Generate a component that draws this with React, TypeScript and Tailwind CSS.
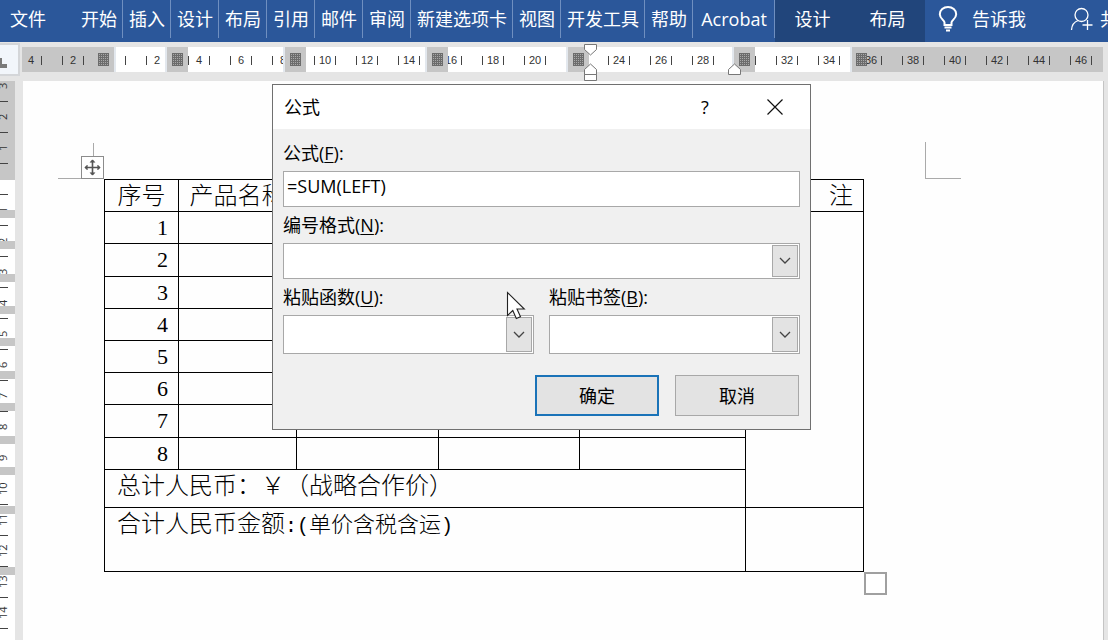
import type { ReactNode } from 'react';
import clsx from 'clsx';

const TABS = ['开始', '插入', '设计', '布局', '引用', '邮件', '审阅', '新建选项卡', '视图', '开发工具', '帮助', 'Acrobat'];
const TABLE_TABS = ['设计', '布局'];

const RULER = [4, 2, 0, ...Array.from({ length: 23 }, (_, i) => (i + 1) * 2)];
const SIDE_RULER = [3, 2, 1, 0, ...Array.from({ length: 14 }, (_, i) => i + 1)];

// column stops on the horizontal ruler
const STOPS = ['left-[143px]', 'left-[261px]', 'left-[403px]', 'left-[544px]', 'left-[710px]'];

// row boundaries on the vertical ruler
const ROW_STOPS = [
  'top-[129px]',
  'top-[160px]',
  'top-[193px]',
  'top-[225px]',
  'top-[257px]',
  'top-[290px]',
  'top-[322px]',
  'top-[355px]',
  'top-[386px]',
  'top-[425px]',
  'top-[486px]',
];

const ROWS = [1, 2, 3, 4, 5, 6, 7, 8];

function Ribbon() {
  return (
    <header className="flex h-[42px] items-stretch overflow-hidden whitespace-nowrap bg-[#2b579a] pb-1 text-lg leading-[38px] text-white">
      <button type="button" className="w-[75px] shrink-0 pl-[10px] text-left">
        文件
      </button>
      <nav className="flex shrink-0">
        {TABS.map((tab) => (
          <button
            key={tab}
            type="button"
            className={clsx('shrink-0 border-r border-[#6f8fc0] pl-[6px] pr-[5px]', tab === 'Acrobat' && 'w-[82px]')}
          >
            {tab}
          </button>
        ))}
      </nav>
      <nav className="-mb-1 flex shrink-0 bg-[#21457b] pb-1">
        {TABLE_TABS.map((tab) => (
          <button key={tab} type="button" className="w-[75px]">
            {tab}
          </button>
        ))}
      </nav>
      <button type="button" className="flex shrink-0 items-center gap-[14px] pl-[13px]">
        <svg width="20" height="26" viewBox="0 0 20 26" fill="none" stroke="currentColor" strokeWidth="2">
          <path d="M6.500 19v-2.500c0-2-4.700-4-4.700-8.300a8.200 7.200 0 0 1 16.400 0c0 4.300-4.700 6.300-4.700 8.300V19z" />
          <path d="M6.500 21.500h7M8 24.500h4" />
        </svg>
        告诉我
      </button>
      <button type="button" className="ml-auto flex shrink-0 items-center gap-[6px] pl-6">
        <svg width="24" height="24" viewBox="0 0 24 24" fill="none" stroke="currentColor" strokeWidth="1.3" className="shrink-0">
          <circle cx="11.500" cy="8" r="6.500" />
          <path d="M1.500 23c.3-4.800 3-8.300 6.700-9.500M17.500 13v10M12.500 18h10" />
        </svg>
        <span className="w-2 overflow-hidden">共</span>
      </button>
    </header>
  );
}

function Grid() {
  return (
    <svg width="11" height="13" viewBox="0 0 11 13" shapeRendering="crispEdges">
      <rect width="11" height="13" fill="#a8a8a8" />
      <path
        d="M0 .5h11M0 2.500h11M0 4.500h11M0 6.500h11M0 8.500h11M0 10.500h11M0 12.500h11M.5 0v13M2.500 0v13M4.500 0v13M6.500 0v13M8.500 0v13M10.500 0v13"
        stroke="#6c6c6c"
        strokeWidth="1"
      />
    </svg>
  );
}

function Ruler() {
  return (
    <div className="flex h-[39px] bg-[#e5e5e5]">
      <div className="relative mt-px h-[33px] w-5 shrink-0 overflow-hidden border-2 border-l-0 border-[#d4d6d9] bg-[#f2f6fb]">
        <svg width="8" height="11" viewBox="0 0 8 11" className="absolute left-0 top-[13px]">
          <path d="M0 0h2v6h5v4H0z" fill="#7a7a7a" />
        </svg>
      </div>
      <div className="relative ml-[2px] mr-[5px] mt-[5px] flex h-[25px] min-w-0 flex-1">
        <div className="w-[92px] shrink-0 bg-[#c6c6c6]" />
        <div className="w-[738px] shrink-0 border-x-2 border-[#e3e8ee] bg-white" />
        <div className="flex-1 bg-[#c6c6c6]" />
        <div className="absolute inset-0 overflow-hidden">
          <div className="-ml-3 flex h-full items-center pt-[2px] text-[11px] text-[#333]">
            {RULER.map((n, i) => (
              <div key={i} className="flex w-[42px] shrink-0 items-center justify-center">
                <span className="h-[9px] w-px bg-[#444]" />
                <span className="w-5 text-center">{n || ''}</span>
                <span className="h-[9px] w-px bg-[#444]" />
              </div>
            ))}
          </div>
        </div>
        {STOPS.map((left) => (
          <div
            key={left}
            className={clsx(
              'absolute inset-y-0 flex w-[23px] items-center justify-center border-l-2 border-[#e3e8ee] bg-[#c6c6c6]',
              left
            )}
          >
            <Grid />
          </div>
        ))}
        <div className="absolute left-[76px] top-[6px]">
          <Grid />
        </div>
        <div className="absolute left-[834px] top-[6px]">
          <Grid />
        </div>
        <svg width="14" height="38" viewBox="0 0 14 38" fill="#fff" stroke="#777" className="absolute -top-[3px] left-[562px]">
          <path d="M.5.500h12v5l-6 5.500-6-5.500z" />
          <path d="M.5 30.500v-5l6-5.500 6 5.500v5zM.500 30.500h12v6h-12z" />
        </svg>
        <svg width="14" height="12" viewBox="0 0 14 12" fill="#fff" stroke="#777" className="absolute left-[706px] top-4">
          <path d="M.5 11.500v-5l6-5.500 6 5.500v5z" />
        </svg>
      </div>
    </div>
  );
}

function SideRuler() {
  return (
    <div className="relative w-[23px] shrink-0 overflow-hidden bg-[#e5e5e5]">
      <div className="absolute inset-y-0 left-0 w-[15px] bg-white">
        <div className="h-[99px] bg-[#c6c6c6]" />
      </div>
      <div className="absolute -top-[10px] left-0 text-[11px] leading-[11px] text-[#333]">
        {SIDE_RULER.map((n, i) => (
          <div key={i} className="flex h-[31px] w-2 flex-col items-end border-b border-[#444]">
            <span className="flex flex-1 rotate-180 items-center justify-center [writing-mode:vertical-rl]">{n || ''}</span>
          </div>
        ))}
      </div>
      {ROW_STOPS.map((top) => (
        <div key={top} className={clsx('absolute left-0 h-2 w-[15px] bg-[#c6c6c6]', top)} />
      ))}
    </div>
  );
}

function Sheet() {
  return (
    <div className="relative min-w-0 flex-1 border-r border-[#c4c4c4] bg-[#fefefe] pl-[81px] pt-[98px]">
      {/* margin corners */}
      <div className="absolute left-[35px] top-[62px] h-9 w-9 border-b border-r border-[#aaa]" />
      <div className="absolute left-[902px] top-[61px] h-[37px] w-9 border-b border-l border-[#aaa]" />
      <button type="button" aria-label="移动表格" className="absolute left-[58px] top-[75px] flex size-[23px] items-center justify-center border border-[#8c8c8c] bg-white">
        <svg width="17" height="17" viewBox="0 0 17 17" fill="none" stroke="#555" strokeWidth="1.600">
          <path d="M8.500 1v15M1 8.500h15" />
          <path d="M6 3.300 8.500.8 11 3.300zM6 13.700l2.500 2.500 2.500-2.500zM3.300 6 .8 8.500 3.300 11zM13.700 6l2.500 2.500-2.500 2.500z" fill="#555" strokeWidth=".5" />
        </svg>
      </button>

      <table className="w-[760px] table-fixed border-collapse font-['Liberation_Serif','Noto_Sans_CJK_SC',serif] text-2xl font-light leading-7 text-black [&_td]:border [&_td]:border-black [&_td]:p-0 [&_th]:border [&_th]:border-black [&_th]:p-0">
        <colgroup>
          <col className="w-[74px]" />
          <col className="w-[118px]" />
          <col className="w-[142px]" />
          <col className="w-[141px]" />
          <col className="w-[166px]" />
          <col />
        </colgroup>
        <thead>
          <tr className="h-8 whitespace-nowrap">
            <th className="font-light">序号</th>
            <th className="font-light">产品名称</th>
            <th />
            <th />
            <th />
            <th className="text-right font-light">
              <span className="pr-[10px]">注</span>
            </th>
          </tr>
        </thead>
        <tbody>
          {ROWS.map((n) => (
            <tr key={n} className={n === 2 || n === 7 ? 'h-[33px]' : 'h-8'}>
              <td className="text-right text-[22px] font-normal leading-7">
                <span className="pr-[10px]">{n}</span>
              </td>
              <td />
              <td />
              <td />
              <td />
              {n === 1 && <td rowSpan={9} />}
            </tr>
          ))}
          <tr className="h-[38px] align-top leading-8">
            <td colSpan={5}>
              <span className="pl-3">总计人民币：￥（战略合作价）</span>
            </td>
          </tr>
          <tr className="h-16 align-top leading-8">
            <td colSpan={5}>
              <span className="pl-3">
                合计人民币金额
                <span className="font-['Liberation_Mono',monospace] text-xl font-normal">:(</span>
                <span className="text-[22px]">单价含税含运</span>
                <span className="font-['Liberation_Mono',monospace] text-xl font-normal">)</span>
              </span>
            </td>
            <td />
          </tr>
        </tbody>
      </table>
      <div className="ml-[760px] size-[23px] border-2 border-[#a0a0a0] bg-white" />
    </div>
  );
}

function Label({ id, hotkey, children }: { id: string; hotkey: string; children: ReactNode }) {
  return (
    <label htmlFor={id} className="mb-[3px] block h-7 leading-[26px]">
      {children}(<span className="underline underline-offset-2">{hotkey}</span>):
    </label>
  );
}

function Combo({ id, className }: { id: string; className: string }) {
  return (
    <div className={clsx('relative', className)}>
      <select id={id} className="block size-full appearance-none border border-[#a8a8a8] bg-white px-1" />
      <span className="pointer-events-none absolute inset-y-[2px] right-[2px] flex w-[26px] items-center justify-center border border-[#a8a8a8] bg-[#e3e3e3]">
        <svg width="12" height="8" viewBox="0 0 12 8" fill="none" stroke="#444" strokeWidth="1.300">
          <path d="m1 1 5 5 5-5" />
        </svg>
      </span>
    </div>
  );
}

function FormulaDialog() {
  return (
    <form
      role="dialog"
      aria-labelledby="dialog-title"
      className="absolute left-[272px] top-[84px] w-[539px] border border-[#707070] bg-[#f0f0f0] text-lg text-black"
      onSubmit={(e) => e.preventDefault()}
    >
      <div className="flex h-11 items-center bg-white pl-[11px]">
        <h2 id="dialog-title">公式</h2>
        <button type="button" aria-label="帮助" className="ml-auto h-full w-[70px]">
          ?
        </button>
        <button type="button" aria-label="关闭" className="flex h-full w-[70px] items-center justify-center">
          <svg width="16" height="16" viewBox="0 0 16 16" fill="none" stroke="#111" strokeWidth="1.200">
            <path d="m.5.500 15 15m0-15-15 15" />
          </svg>
        </button>
      </div>

      <div className="flex flex-col gap-[5px] px-[10px] pb-[13px] pt-[11px]">
        <div>
          <Label id="formula" hotkey="F">
            公式
          </Label>
          <input id="formula" defaultValue="=SUM(LEFT)" className="block h-9 w-full border border-[#a8a8a8] bg-white px-[3px] pb-[6px]" />
        </div>
        <div>
          <Label id="format" hotkey="N">
            编号格式
          </Label>
          <Combo id="format" className="h-9" />
        </div>
        <div className="flex gap-[15px]">
          <div className="flex-1">
            <Label id="function" hotkey="U">
              粘贴函数
            </Label>
            <Combo id="function" className="h-[39px]" />
          </div>
          <div className="flex-1">
            <Label id="bookmark" hotkey="B">
              粘贴书签
            </Label>
            <Combo id="bookmark" className="h-[39px]" />
          </div>
        </div>
        <div className="mt-4 flex justify-end gap-4 pr-px">
          <button type="submit" className="h-[41px] w-[124px] border-2 border-[#1a73b8] bg-[#e3e3e3]">
            确定
          </button>
          <button type="button" className="h-[41px] w-[124px] border border-[#a8a8a8] bg-[#e3e3e3]">
            取消
          </button>
        </div>
      </div>
    </form>
  );
}

export default function App() {
  return (
    <div className="relative flex min-h-screen flex-col overflow-hidden bg-[#e5e5e5] font-['Open_Sans','Noto_Sans_CJK_SC',sans-serif]">
      <Ribbon />
      <div className="font-['Liberation_Sans',sans-serif]">
        <Ruler />
      </div>
      <main className="flex flex-1 pr-1">
        <SideRuler />
        <Sheet />
      </main>
      <FormulaDialog />
      <svg width="20" height="29" viewBox="0 0 20 29" className="pointer-events-none absolute left-[506px] top-[291px]">
        <path d="M1.500 1.500v23l5.300-5 3.500 8 4.200-1.800-3.500-7.700h7.300z" fill="#fff" stroke="#222" strokeWidth="1.100" />
      </svg>
    </div>
  );
}
